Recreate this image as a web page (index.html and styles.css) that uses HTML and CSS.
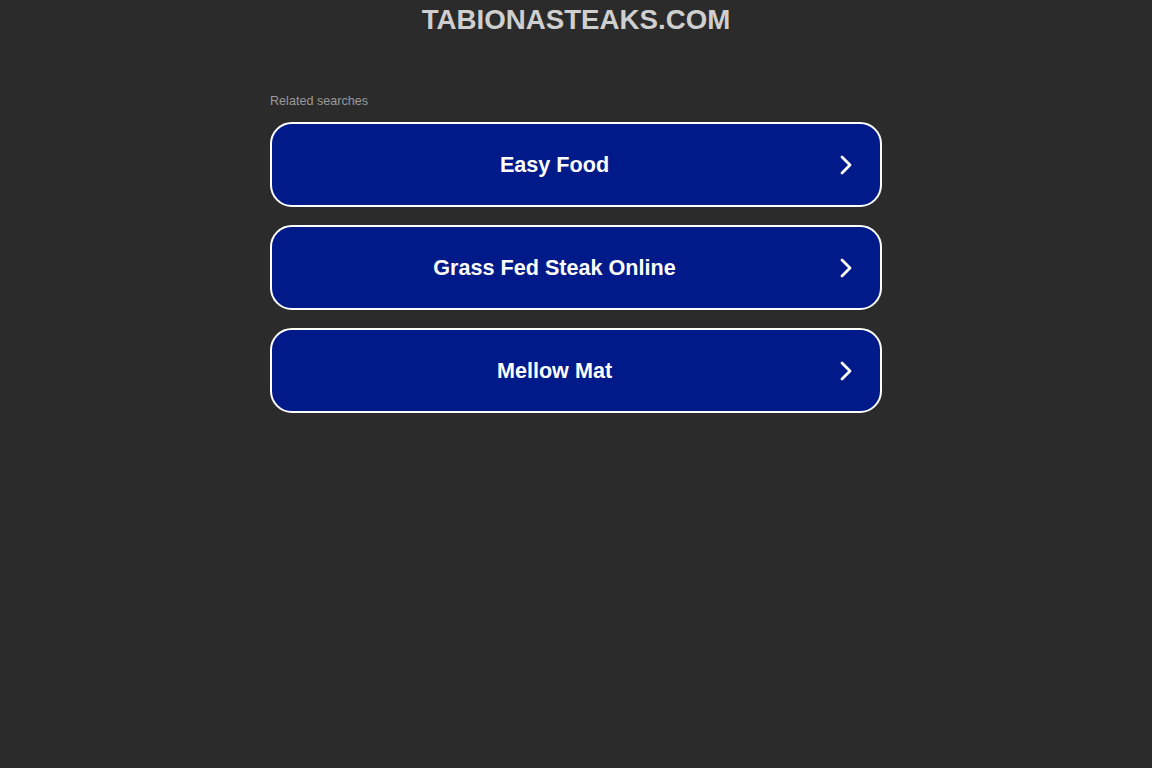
FILE: index.html
```html
<!DOCTYPE html>
<html lang="en">
<head>
    <meta charset="UTF-8">
    <title>tabionasteaks.com</title>
    <link rel="stylesheet" href="styles.css">
</head>
<body>
    <header class="domain">TABIONASTEAKS.COM</header>

    <main class="searches">
        <p class="searches-title">Related searches</p>

        <a class="search-link" href="#">
            <span class="search-text">Easy Food</span>
            <svg class="chevron" viewBox="0 0 20 20"><path d="M5 2 L13 10 L5 18"/></svg>
        </a>
        <a class="search-link" href="#">
            <span class="search-text">Grass Fed Steak Online</span>
            <svg class="chevron" viewBox="0 0 20 20"><path d="M5 2 L13 10 L5 18"/></svg>
        </a>
        <a class="search-link" href="#">
            <span class="search-text">Mellow Mat</span>
            <svg class="chevron" viewBox="0 0 20 20"><path d="M5 2 L13 10 L5 18"/></svg>
        </a>
    </main>
</body>
</html>
```

FILE: styles.css
```css
body {
    margin: 0;
    padding: 0;
    background-color: #2b2b2b;
    font-family: "Liberation Sans", Arial, sans-serif;
}

.domain {
    text-align: center;
    color: #cfcfcf;
    font-size: 27.7px;
    font-weight: bold;
    padding-top: 4px;
    line-height: 32px;
}

.searches {
    width: 612px;
    margin: 58px 0 0 270px;
}

.searches-title {
    color: #9a9a9a;
    font-size: 12.6px;
    margin: 0 0 14px;
    line-height: 14px;
}

.search-link {
    display: flex;
    align-items: center;
    box-sizing: border-box;
    height: 85px;
    margin-bottom: 18px;
    padding-right: 23px;
    background-color: #011a89;
    border: 2px solid #ffffff;
    border-radius: 22px;
    text-decoration: none;
}

.search-text {
    flex: 1;
    text-align: center;
    color: #ffffff;
    font-size: 21.6px;
    font-weight: bold;
}

.chevron {
    width: 20px;
    height: 20px;
    fill: none;
    stroke: #ffffff;
    stroke-width: 2.8;
    stroke-linecap: round;
    stroke-linejoin: round;
}
```
